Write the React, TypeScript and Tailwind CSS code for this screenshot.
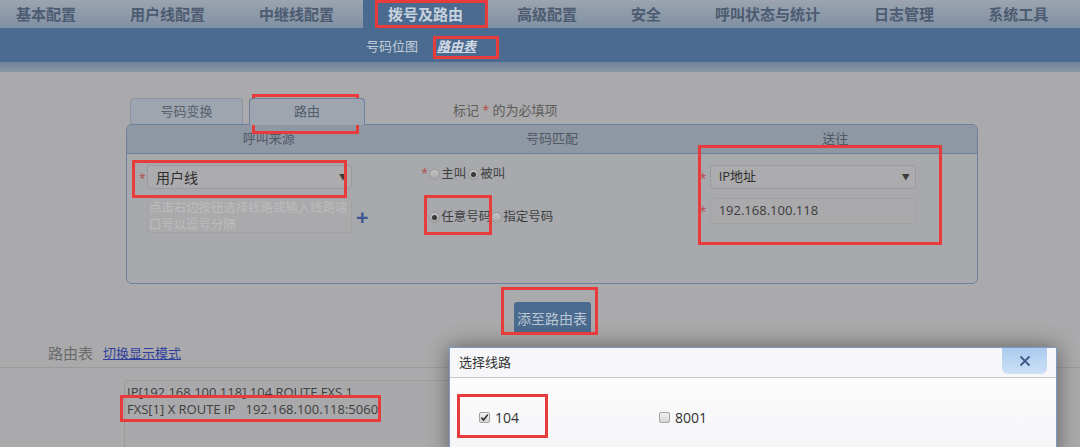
import React from "react";

const navItems = [
  "基本配置",
  "用户线配置",
  "中继线配置",
  "拨号及路由",
  "高级配置",
  "安全",
  "呼叫状态与统计",
  "日志管理",
  "系统工具",
];

// red annotation boxes drawn over the screenshot
const marks = [
  { l: 375, t: 0, w: 113, h: 28 },
  { l: 433, t: 36, w: 66, h: 23 },
  { l: 252, t: 94, w: 107, h: 40 },
  { l: 132, t: 160, w: 215, h: 38 },
  { l: 424, t: 195, w: 68, h: 40 },
  { l: 698, t: 145, w: 244, h: 100 },
  { l: 501, t: 287, w: 97, h: 48 },
  { l: 120, t: 395, w: 261, h: 27 },
  { l: 457, t: 394, w: 91, h: 44 },
];

function Radio({ checked }: { checked?: boolean }) {
  return (
    <span className="shrink-0 inline-flex w-[11px] h-[11px] rounded-full border border-[#979797] bg-gradient-to-b from-[#c4c4c4] to-[#a6a6a6] items-center justify-center mr-[1px]">
      {checked && <span className="w-[5px] h-[5px] rounded-full bg-[#3a3a3a]" />}
    </span>
  );
}

function Checkbox({ checked }: { checked?: boolean }) {
  return (
    <span className="shrink-0 inline-flex w-[11px] h-[11px] rounded-[2px] border border-[#a5a5a5] bg-gradient-to-b from-[#f2f2f2] to-[#d6d6d6] items-center justify-center">
      {checked && (
        <svg viewBox="0 0 10 10" className="w-[9px] h-[9px]">
          <path d="M1.5 5.2 L4 7.8 L8.6 1.8" fill="none" stroke="#2a2a2a" strokeWidth="1.8" />
        </svg>
      )}
    </span>
  );
}

function Star() {
  return <span className="text-[#b84848] text-[12px] leading-none">*</span>;
}

export default function App() {
  return (
    <div className="relative w-[1080px] h-[447px] overflow-hidden bg-[#aaa9ab] font-['Open_Sans','Noto_Sans_CJK_SC',sans-serif]">
      {/* Top menu */}
      <nav className="flex h-[28px] pl-[16px] gap-[54px] bg-gradient-to-b from-[#9ba4af] to-[#8090a3]">
        {navItems.map((item) =>
          item === "拨号及路由" ? (
            <div
              key={item}
              className="-mx-[25px] px-[25px] bg-[#4a6b8f] text-[15px] leading-[28px] font-bold text-[#c8d2dd] font-['Noto_Sans_CJK_SC',sans-serif]"
            >
              {item}
            </div>
          ) : (
            <div
              key={item}
              className="text-[15px] leading-[28px] font-bold text-[#4c5b71] font-['Noto_Sans_CJK_SC',sans-serif]"
            >
              {item}
            </div>
          )
        )}
      </nav>

      {/* Sub menu */}
      <div className="flex items-center h-[34px] pl-[366px] pt-[3px] gap-[19px] bg-[#4a6b8f] text-[13px]">
        <span className="text-[#c3ccd6]">号码位图</span>
        <span className="italic font-bold underline text-[#d2dae6]">路由表</span>
      </div>
      <div className="h-[10px] bg-gradient-to-b from-[#70839a] to-[#8996a6]" />

      {/* Tabs */}
      <div className="flex items-end pl-[130px] pt-[26px] text-[13px]">
        <div className="w-[113px] h-[26px] rounded-t-[4px] border border-b-0 border-[#8b97a7] bg-[#9ea5af] text-[#56606c] flex items-center justify-center">
          号码变换
        </div>
        <div className="ml-[6px] w-[116px] h-[27px] -mb-px rounded-t-[4px] border border-b-0 border-[#6b819d] bg-[#9ea5af] text-[#525c68] flex items-center justify-center relative z-10">
          路由
        </div>
        <div className="ml-[88px] h-[26px] flex items-center text-[#5c5c5c]">
          标记&nbsp;<Star />&nbsp;的为必填项
        </div>
      </div>

      {/* Route panel */}
      <div className="ml-[126px] w-[852px] h-[160px] rounded-[6px] border border-[#6b819d] bg-[#a7a9ad] overflow-hidden">
        <div className="grid grid-cols-3 h-[29px] bg-[#8f97a3] border-b border-[#6b819d] text-[13px] text-[#4f5865]">
          <div className="flex items-center justify-center">呼叫来源</div>
          <div className="flex items-center justify-center">号码匹配</div>
          <div className="flex items-center justify-center">送往</div>
        </div>
        <div className="grid grid-cols-3 text-[12.5px]">
          <div className="pl-[12px] pt-[11px]">
            <div className="flex items-start">
              <span className="w-[8px] pt-[5px]"><Star /></span>
              <div className="w-[205px] h-[24px] rounded-[3px] border border-[#9b9b9c] bg-[#acabad] flex items-center justify-between pl-[8px] pr-[4px] text-[14px] text-[#2f2f2f]">
                用户线
                <span className="text-[8px] text-[#3c3c3c]">▼</span>
              </div>
            </div>
            <div className="flex items-center mt-[9px] ml-[8px]">
              <div className="w-[205px] h-[35px] rounded-[3px] border border-[#a2a2a3] bg-[#aaa9ab] px-[1px] text-[12.4px] leading-[17px] text-[#bcbcbd] overflow-hidden">
                点击右边按钮选择线路或输入线路端口号以逗号分隔
              </div>
              <span className="ml-[4px] text-[22px] font-bold leading-none text-[#3d5891]">+</span>
            </div>
          </div>

          <div className="pl-[11px] pt-[12px] text-[#3e3e3e]">
            <div className="flex items-center h-[16px]">
              <span className="w-[8px]"><Star /></span>
              <Radio />
              <span className="mr-[2px]">主叫</span>
              <Radio checked />
              <span>被叫</span>
            </div>
            <div className="flex items-center h-[16px] mt-[27px] pl-[8px]">
              <Radio checked />
              <span className="text-[12.5px]">任意号码</span>
              <Radio />
              <span>指定号码</span>
            </div>
          </div>

          <div className="pl-[5px] pt-[11px]">
            <div className="flex items-start">
              <span className="w-[11px] pt-[5px] pl-[1px]"><Star /></span>
              <div className="w-[206px] h-[24px] rounded-[3px] border border-[#9b9b9c] bg-[#acabad] flex items-center justify-between pl-[8px] pr-[5px] text-[13px] text-[#2f2f2f]">
                IP地址
                <span className="text-[8px] text-[#3c3c3c]">▼</span>
              </div>
            </div>
            <div className="flex items-start mt-[9px]">
              <span className="w-[11px] pt-[5px] pl-[1px]"><Star /></span>
              <div className="w-[206px] h-[26px] rounded-[3px] border border-[#a2a2a3] bg-[#aaa9ab] flex items-center pl-[8px] text-[13px] text-[#3c3c3c]">
                192.168.100.118
              </div>
            </div>
          </div>
        </div>
      </div>

      {/* Add button */}
      <div className="ml-[126px] w-[852px] flex justify-center pt-[18px]">
        <button className="w-[77px] h-[32px] rounded-[3px] bg-[#4a6b8f] text-[14px] text-[#bac6d2]">
          添至路由表
        </button>
      </div>

      {/* Route table */}
      <div className="flex items-end gap-[10px] pl-[48px] pt-[9px] pb-[4px] border-b border-[#9b9b9b]">
        <span className="text-[15px] leading-[20px] text-[#6b6b6b]">路由表</span>
        <span className="text-[13px] leading-[20px] underline text-[#2f3f9c]">切换显示模式</span>
      </div>
      <div className="mt-[12px] ml-[124px] w-[740px] h-[90px] rounded-[3px] border border-[#9c9c9c] bg-[#a9a9ab] px-[2px] pt-[3px] text-[13px] leading-[17px] text-[#404040] whitespace-pre">
        <div>IP[192.168.100.118] 104 ROUTE FXS 1</div>
        <div>FXS[1] X ROUTE IP   192.168.100.118:5060</div>
      </div>

      {/* Select line dialog */}
      <div className="absolute left-[449px] top-[347px] w-[608px] h-[110px] border-x border-t border-[#7d9cc4] bg-gradient-to-b from-white to-[#f4f4f7] shadow-[0_0_20px_rgba(0,0,0,0.45)]">
        <div className="relative h-[30px] bg-[#f7f7f9] border-b border-[#c6c6c6] flex items-center pl-[9px] text-[13px] text-[#333]">
          选择线路
          <button className="absolute right-[9px] top-0 w-[45px] h-[26px] rounded-b-[6px] bg-gradient-to-b from-[#abcaee] to-[#cde1f6] flex items-center justify-center">
            <svg viewBox="0 0 12 12" className="w-[12px] h-[12px]">
              <path d="M1.5 1.5 L10.5 10.5 M10.5 1.5 L1.5 10.5" stroke="#3f5c88" strokeWidth="1.8" />
            </svg>
          </button>
        </div>
        <div className="flex items-center pl-[29px] pt-[29px] text-[14px] text-[#333]">
          <div className="w-[180px] flex items-center gap-[5px]">
            <Checkbox checked />
            <span>104</span>
          </div>
          <div className="flex items-center gap-[5px]">
            <Checkbox />
            <span>8001</span>
          </div>
        </div>
      </div>

      {marks.map((m, i) => (
        <div
          key={i}
          className="absolute border-[3px] border-[#e83b3b] pointer-events-none"
          style={{ left: m.l, top: m.t, width: m.w, height: m.h }}
        />
      ))}
    </div>
  );
}
